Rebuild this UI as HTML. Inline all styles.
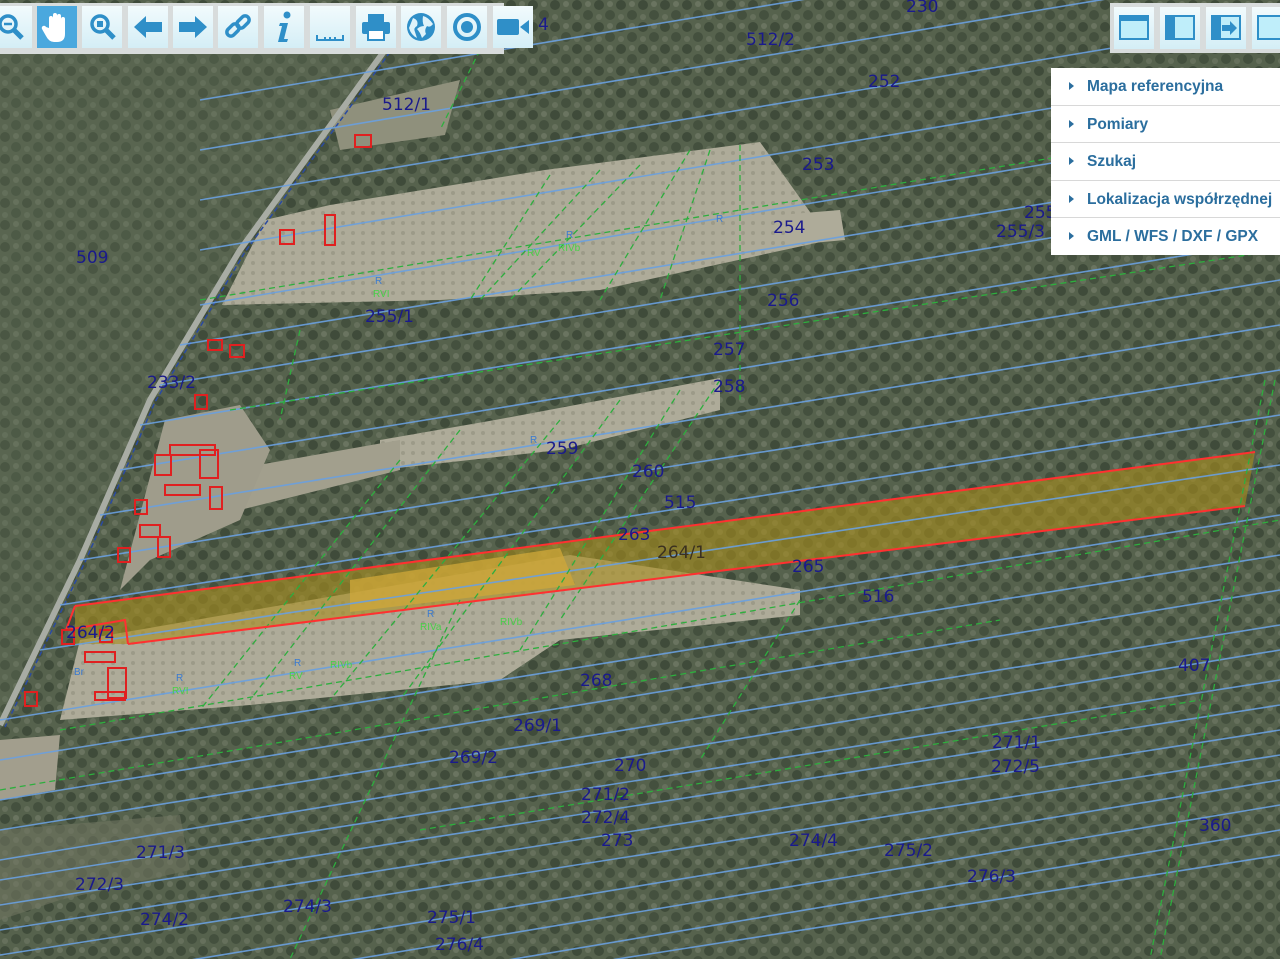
<!DOCTYPE html>
<html><head><meta charset="utf-8"><style>
html,body{margin:0;padding:0;width:1280px;height:959px;overflow:hidden;background:#4d5a45;font-family:"Liberation Sans",sans-serif}
svg{position:absolute;left:0;top:0}
.tb{position:absolute;top:3px;height:51px;background:#d8dcdc;}
.b{position:absolute;top:6px;width:40px;height:42px;background:linear-gradient(#f2fbfd,#d4eef6);box-sizing:border-box;}
.b svg{position:static}
.menu{position:absolute;left:1051px;top:68px;width:229px;background:#fff;}
.mi{height:36.5px;border-bottom:1px solid #d8d8d8;line-height:37px;padding-left:36px;position:relative;color:#2b6e9e;font-weight:bold;font-size:15.5px;white-space:nowrap}
.mi:before{content:"";position:absolute;left:18px;top:14px;border-left:5px solid #2b6e9e;border-top:4px solid transparent;border-bottom:4px solid transparent}
</style></head><body>
<svg width="1280" height="959" viewBox="0 0 1280 959">
<defs><pattern id="t" width="22" height="22" patternUnits="userSpaceOnUse"><rect width="22" height="22" fill="#56624d"/><circle cx="5" cy="5" r="5" fill="#3f4b3a"/><circle cx="16" cy="15" r="5" fill="#44503e"/><circle cx="16" cy="4" r="3" fill="#6a7460"/><circle cx="5" cy="17" r="3" fill="#66705c"/></pattern>
<pattern id="f" width="10" height="10" patternUnits="userSpaceOnUse"><rect width="10" height="10" fill="#aeab99"/><circle cx="3" cy="3" r="2" fill="#9c9a88"/></pattern></defs>
<rect width="1280" height="959" fill="url(#t)"/>
<polygon points="0,0 380,50 240,250 150,400 80,560 0,725" fill="#5f6c56" opacity=".35"/>
<!-- fields -->
<polygon points="222,305 265,220 330,205 545,170 760,142 830,240 600,290 440,300" fill="url(#f)"/>
<polygon points="330,110 460,80 445,135 340,150" fill="#8f907c"/>
<polygon points="380,440 495,420 720,378 720,410 560,450 380,470" fill="url(#f)"/>
<polygon points="230,470 400,440 400,470 240,510" fill="#a29f8d"/>
<polygon points="80,640 570,555 800,590 800,615 560,640 500,680 250,705 60,720" fill="url(#f)"/>
<polygon points="165,420 240,405 270,450 240,520 150,560 120,590" fill="#9f9c8b"/>
<polygon points="0,740 60,735 55,790 0,800" fill="#a29e8d"/>
<polygon points="0,830 180,815 190,870 60,900 0,920" fill="#6f7561" opacity=".6"/>
<polygon points="780,215 840,210 845,240 790,245" fill="#aeab99"/>
<!-- yellow strip -->
<polygon points="75,606 1255,452 1245,506 128,644 75,644" fill="#a88e1c" opacity=".6"/>
<polygon points="350,580 560,548 575,585 350,612" fill="#d0a83a" opacity=".75"/>
<!-- road -->
<polyline points="385,50 240,250 150,400 80,560 0,725" fill="none" stroke="#a8aca4" stroke-width="6"/>
<polyline points="385,50 240,250 150,400 80,560 0,725" fill="none" stroke="#2a4aa0" stroke-width="1.5" stroke-dasharray="5,3" transform="translate(5,2)"/>
<g stroke="#6aa0e0" stroke-width="1.6" fill="none" opacity=".9">
<line x1="200" y1="100" x2="1280" y2="-80"/>
<line x1="200" y1="150" x2="1280" y2="-30"/>
<line x1="200" y1="200" x2="1280" y2="20"/>
<line x1="200" y1="250" x2="1280" y2="70"/>
<line x1="200" y1="305" x2="1280" y2="125"/>
<line x1="180" y1="345" x2="1280" y2="165"/>
<line x1="160" y1="385" x2="1280" y2="200"/>
<line x1="140" y1="425" x2="1280" y2="240"/>
<line x1="120" y1="470" x2="1280" y2="280"/>
<line x1="100" y1="515" x2="1280" y2="325"/>
<line x1="80" y1="560" x2="1280" y2="370"/>
<line x1="60" y1="605" x2="1280" y2="415"/>
<line x1="40" y1="650" x2="1280" y2="465"/>
<line x1="0" y1="720" x2="1280" y2="515"/>
<line x1="0" y1="760" x2="1280" y2="555"/>
<line x1="0" y1="800" x2="1280" y2="590"/>
<line x1="0" y1="830" x2="1280" y2="625"/>
<line x1="0" y1="860" x2="1280" y2="650"/>
<line x1="0" y1="880" x2="1280" y2="680"/>
<line x1="0" y1="905" x2="1280" y2="705"/>
<line x1="0" y1="930" x2="1280" y2="730"/>
<line x1="0" y1="955" x2="1280" y2="755"/>
<line x1="100" y1="975" x2="1280" y2="780"/>
<line x1="200" y1="985" x2="1280" y2="805"/>
<line x1="300" y1="995" x2="1280" y2="830"/>
<line x1="420" y1="990" x2="1280" y2="855"/>
</g>
<g stroke="#2eae3e" stroke-width="1.3" fill="none" stroke-dasharray="6,4">
<line x1="600" y1="170" x2="480" y2="300"/><line x1="640" y1="165" x2="510" y2="300"/>
<line x1="690" y1="150" x2="600" y2="300"/><line x1="710" y1="150" x2="660" y2="300"/>
<line x1="740" y1="145" x2="740" y2="400"/><line x1="550" y1="175" x2="470" y2="300"/>
<line x1="720" y1="380" x2="560" y2="620"/><line x1="680" y1="390" x2="520" y2="650"/>
<line x1="620" y1="400" x2="400" y2="700"/><line x1="560" y1="420" x2="330" y2="700"/>
<line x1="460" y1="430" x2="250" y2="700"/><line x1="400" y1="460" x2="200" y2="710"/>
<line x1="800" y1="600" x2="700" y2="760"/><line x1="460" y1="600" x2="290" y2="959"/>
<line x1="1275" y1="380" x2="1160" y2="959"/><line x1="1265" y1="380" x2="1150" y2="959"/>
<line x1="300" y1="330" x2="280" y2="420"/><line x1="480" y1="50" x2="440" y2="130"/>
<line x1="200" y1="300" x2="1100" y2="150"/><line x1="230" y1="410" x2="1280" y2="250"/>
<line x1="60" y1="730" x2="1280" y2="520"/><line x1="0" y1="790" x2="1000" y2="620"/>
<line x1="420" y1="830" x2="1200" y2="700"/>
</g>
<g stroke="#ff3030" stroke-width="2" fill="none">
<polyline points="75,606 1255,452"/><polyline points="128,644 1245,506"/>
<polyline points="75,606 66,630 125,620 128,644"/>
</g>
<g fill="none" stroke="#e02020" stroke-width="2">
<rect x="355" y="135" width="16" height="12"/><rect x="280" y="230" width="14" height="14"/><rect x="325" y="215" width="10" height="30"/>
<rect x="208" y="340" width="14" height="10"/><rect x="230" y="345" width="14" height="12"/><rect x="195" y="395" width="12" height="14"/>
<rect x="155" y="455" width="16" height="20"/><rect x="170" y="445" width="45" height="10"/><rect x="200" y="450" width="18" height="28"/>
<rect x="165" y="485" width="35" height="10"/><rect x="135" y="500" width="12" height="14"/><rect x="210" y="487" width="12" height="22"/>
<rect x="140" y="525" width="20" height="12"/><rect x="158" y="537" width="12" height="20"/><rect x="118" y="548" width="12" height="14"/>
<rect x="62" y="630" width="12" height="14"/><rect x="100" y="630" width="12" height="12"/><rect x="85" y="652" width="30" height="10"/>
<rect x="108" y="668" width="18" height="30"/><rect x="95" y="692" width="30" height="8"/><rect x="25" y="692" width="12" height="14"/>
</g>
<g fill="#1a1a8c" font-size="17" font-family="DejaVu Sans, sans-serif">
<text x="746" y="45">512/2</text><text x="868" y="87">252</text><text x="382" y="110">512/1</text><text x="802" y="170">253</text>
<text x="773" y="233">254</text><text x="996" y="237">255/3</text><text x="1024" y="218">255</text><text x="76" y="263">509</text>
<text x="767" y="306">256</text><text x="365" y="322">255/1</text><text x="713" y="355">257</text><text x="147" y="388">233/2</text>
<text x="713" y="392">258</text><text x="546" y="454">259</text><text x="632" y="477">260</text><text x="664" y="508">515</text>
<text x="618" y="540">263</text><text x="657" y="558" fill="#3a3020">264/1</text><text x="792" y="572">265</text><text x="862" y="602">516</text>
<text x="66" y="638">264/2</text><text x="1178" y="671">407</text><text x="580" y="686">268</text><text x="513" y="731">269/1</text>
<text x="449" y="763">269/2</text><text x="614" y="771">270</text><text x="992" y="748">271/1</text><text x="991" y="772">272/5</text>
<text x="581" y="800">271/2</text><text x="581" y="823">272/4</text><text x="601" y="846">273</text><text x="789" y="846">274/4</text>
<text x="136" y="858">271/3</text><text x="884" y="856">275/2</text><text x="1199" y="831">360</text><text x="967" y="882">276/3</text>
<text x="75" y="890">272/3</text><text x="283" y="912">274/3</text><text x="140" y="925">274/2</text><text x="427" y="923">275/1</text><text x="435" y="950">276/4</text>
<text x="906" y="12">230</text><text x="538" y="30">4</text>
</g>
<g fill="#3a7ad0" font-size="10"><text x="375" y="284">R</text><text x="566" y="238">R</text><text x="716" y="222">R</text><text x="530" y="443">R</text><text x="427" y="617">R</text><text x="294" y="666">R</text><text x="176" y="681">R</text><text x="74" y="675">Br</text></g>
<g fill="#48d048" font-size="10"><text x="373" y="297">RVI</text><text x="558" y="251">RIVb</text><text x="527" y="256">RV</text><text x="420" y="630">RIVa</text><text x="289" y="679">RV</text><text x="172" y="694">RVI</text><text x="500" y="625">RIVb</text><text x="330" y="668">RIVb</text></g>
</svg>
<div class="tb" style="left:0;width:504px"></div>
<div class="b" style="left:-8px"><svg width="40" height="42"><circle cx="16" cy="18" r="8" fill="none" stroke="#2f8fc8" stroke-width="3.5"/><line x1="22" y1="24" x2="30" y2="32" stroke="#2f8fc8" stroke-width="5"/><line x1="12" y1="18" x2="20" y2="18" stroke="#2f8fc8" stroke-width="2.5"/></svg></div>
<div class="b" style="left:37px;background:#4aa8de"><svg width="40" height="42"><path d="M12 22 V12 a2 2 0 0 1 4 0 V20 V9 a2 2 0 0 1 4 0 V20 V10 a2 2 0 0 1 4 0 V21 V13 a2 2 0 0 1 4 0 V28 q0 8 -8 8 h-3 q-5 0 -8 -6 l-4 -7 a2 2 0 0 1 4 -2z" fill="#fff"/></svg></div>
<div class="b" style="left:82px"><svg width="40" height="42"><circle cx="18" cy="18" r="8" fill="none" stroke="#2f8fc8" stroke-width="3.5"/><rect x="15" y="15" width="6" height="6" fill="#2f8fc8"/><line x1="24" y1="24" x2="32" y2="32" stroke="#2f8fc8" stroke-width="5"/></svg></div>
<div class="b" style="left:128px"><svg width="40" height="42"><path d="M6 21 L18 10 V16 H34 V26 H18 V32z" fill="#2f8fc8"/></svg></div>
<div class="b" style="left:173px"><svg width="40" height="42"><path d="M34 21 L22 10 V16 H6 V26 H22 V32z" fill="#2f8fc8"/></svg></div>
<div class="b" style="left:218px"><svg width="40" height="42"><g fill="none" stroke="#2f8fc8" stroke-width="3.5"><rect x="8" y="20" width="14" height="8" rx="4" transform="rotate(-45 15 24)"/><rect x="18" y="12" width="14" height="8" rx="4" transform="rotate(-45 25 16)"/></g></svg></div>
<div class="b" style="left:264px"><svg width="40" height="42"><circle cx="23" cy="9" r="3.5" fill="#2f8fc8"/><path d="M16 17 h8 l-4 16 h4 l-1 3 h-9 l4 -16 h-3z" fill="#2f8fc8"/></svg></div>
<div class="b" style="left:310px"><svg width="40" height="42"><path d="M7 29 V34 H33 V29 M15 31 V34 M20 31 V34 M25 31 V34" fill="none" stroke="#2f8fc8" stroke-width="2"/></svg></div>
<div class="b" style="left:356px"><svg width="40" height="42"><rect x="12" y="8" width="16" height="8" fill="#2f8fc8"/><rect x="6" y="16" width="28" height="12" rx="2" fill="#2f8fc8"/><rect x="12" y="24" width="16" height="10" fill="#fff" stroke="#2f8fc8" stroke-width="2"/></svg></div>
<div class="b" style="left:401px"><svg width="40" height="42"><circle cx="20" cy="21" r="14" fill="#2f8fc8"/><path d="M12 12 q6 2 4 8 q-4 2 -2 6 l2 6 q-6 -3 -8 -10 z M22 10 q5 1 10 8 q-3 4 -6 2 q-3 4 -1 8 l-4 4 q-2 -6 -5 -9 q3 -3 7 -3 q-2 -4 -1 -10z" fill="#dff3fa"/></svg></div>
<div class="b" style="left:447px"><svg width="40" height="42"><circle cx="20" cy="21" r="12" fill="none" stroke="#2f8fc8" stroke-width="4"/><circle cx="20" cy="21" r="6" fill="#2f8fc8"/></svg></div>
<div class="b" style="left:493px"><svg width="40" height="42"><rect x="4" y="13" width="22" height="16" rx="2" fill="#2f8fc8"/><path d="M27 21 L36 14 V28z" fill="#2f8fc8"/></svg></div>
<div class="tb" style="left:1110px;width:170px;height:50px"></div>
<div class="b" style="left:1114px;top:7px"><svg width="40" height="42"><rect x="6" y="9" width="28" height="23" fill="#bfeefa" stroke="#2f8fc8" stroke-width="2"/><rect x="6" y="9" width="28" height="5" fill="#2f8fc8"/></svg></div>
<div class="b" style="left:1160px;top:7px"><svg width="40" height="42"><rect x="6" y="9" width="28" height="23" fill="#bfeefa" stroke="#2f8fc8" stroke-width="2"/><rect x="6" y="9" width="9" height="23" fill="#2f8fc8"/></svg></div>
<div class="b" style="left:1206px;top:7px"><svg width="40" height="42"><rect x="6" y="9" width="28" height="23" fill="#bfeefa" stroke="#2f8fc8" stroke-width="2"/><rect x="6" y="9" width="9" height="23" fill="#2f8fc8"/><path d="M16 18 h8 v-4 l7 7 -7 7 v-4 h-8z" fill="#2f8fc8"/></svg></div>
<div class="b" style="left:1252px;top:7px"><svg width="40" height="42"><rect x="6" y="9" width="28" height="23" fill="#bfeefa" stroke="#2f8fc8" stroke-width="2"/></svg></div>
<div class="menu">
<div class="mi">Mapa referencyjna</div><div class="mi">Pomiary</div><div class="mi">Szukaj</div><div class="mi">Lokalizacja współrzędnej</div><div class="mi" style="border-bottom:none">GML / WFS / DXF / GPX</div>
</div>
</body></html>
